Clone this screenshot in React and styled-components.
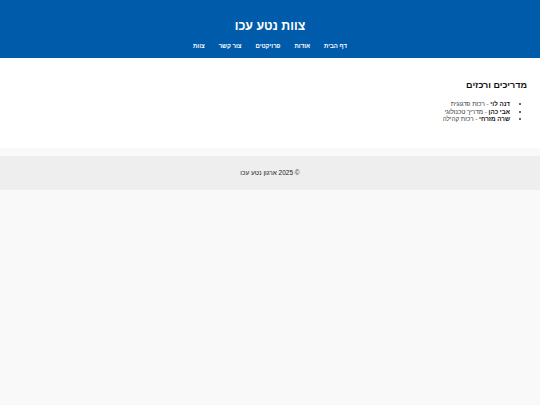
import styled, { createGlobalStyle } from 'styled-components'

const GlobalStyle = createGlobalStyle`
  html, body {
    margin: 0;
    padding: 0;
    background-color: #f9f9f9;
    font-family: "Liberation Sans", Arial, sans-serif;
  }
`;

const Page = styled.div`
  direction: rtl;
  color: #222;
`;

const Header = styled.header`
  background-color: #005baa;
  color: #fff;
  text-align: center;
  padding: 18px 0 8px;
`;

const Title = styled.h1`
  margin: 0;
  font-size: 12.4px;
  line-height: 17px;
  font-weight: bold;
`;

const Nav = styled.nav`
  display: flex;
  justify-content: center;
  gap: 14px;
  margin-top: 7px;
`;

const NavLink = styled.a`
  color: #fff;
  font-size: 6px;
  line-height: 8px;
  font-weight: bold;
  text-decoration: none;
`;

const Main = styled.main`
  background-color: #fff;
  padding: 21px 13px 25px;
`;

const SectionTitle = styled.h2`
  margin: 0 0 9px;
  font-size: 9px;
  line-height: 12px;
  font-weight: bold;
  color: #111;
`;

const List = styled.ul`
  margin: 0;
  padding-right: 17px;
  font-size: 6.25px;
  line-height: 7.5px;
  color: #333;
`;

const Name = styled.strong`
  color: #111;
`;

const Footer = styled.footer`
  margin-top: 8px;
  background-color: #eee;
  text-align: center;
  font-size: 6.5px;
  line-height: 34px;
  color: #222;
`;

const links = ['דף הבית', 'אודות', 'פרויקטים', 'צור קשר', 'צוות'];

const team = [
  { name: 'דנה לוי', role: 'רכזת פדגוגית' },
  { name: 'אבי כהן', role: 'מדריך טכנולוגי' },
  { name: 'שרה מזרחי', role: 'רכזת קהילה' },
];

export default function App() {
  return (
    <Page>
      <GlobalStyle />
      <Header>
        <Title>צוות נטע עכו</Title>
        <Nav>
          {links.map((l) => (
            <NavLink key={l} href="#">{l}</NavLink>
          ))}
        </Nav>
      </Header>
      <Main>
        <SectionTitle>מדריכים ורכזים</SectionTitle>
        <List>
          {team.map((m) => (
            <li key={m.name}>
              <Name>{m.name}</Name> - {m.role}
            </li>
          ))}
        </List>
      </Main>
      <Footer>© 2025 ארגון נטע עכו</Footer>
    </Page>
  );
}
